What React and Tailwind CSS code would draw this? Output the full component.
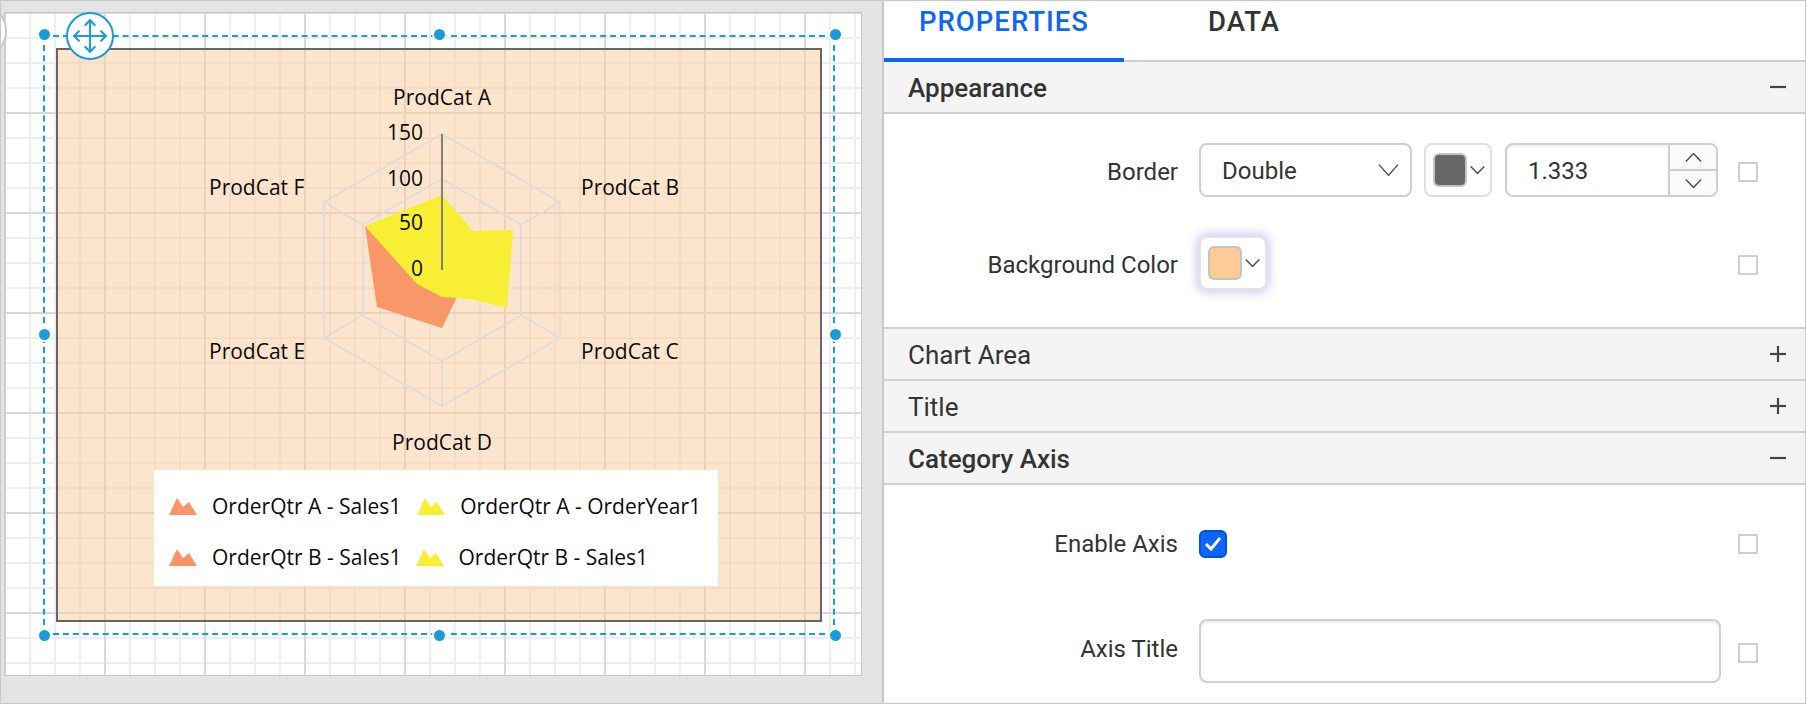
import { Move } from 'lucide-react';

const Chevron = ({ className, up }) => (
    <svg viewBox="0 0 20 10" fill="none" stroke="#505050" strokeWidth="1.4" preserveAspectRatio="none" className={className}>
        <polyline vectorEffect="non-scaling-stroke" points={up ? '1,9.5 10,0.5 19,9.5' : '1,0.5 10,9.5 19,0.5'} />
    </svg>
);

const Handle = ({ className }) => (
    <div className={`absolute w-[15px] h-[15px] rounded-full bg-[#1a9bdb] border-2 border-white ${className}`} />
);

const SquareBox = ({ className }) => <div className={`w-5 h-5 border-2 border-[#cfcfcf] bg-white shrink-0 ${className}`} />;

const Mountains = ({ color }) => (
    <svg width="28" height="17" viewBox="0 0 28 17" className="shrink-0">
        <polygon points="0,17 8,0 14,9 20,4 28,17" fill={color} />
    </svg>
);

const LegendItem = ({ color, label }) => (
    <div className="flex items-center gap-[15px]">
        <Mountains color={color} />
        <span>{label}</span>
    </div>
);

const SectionHeader = ({ title, open, bold }) => (
    <div className="h-[52px] shrink-0 bg-[#f4f4f4] border-b-2 border-[#d0d0d0] pl-6 pr-[18px] flex items-center justify-between">
        <span className={`text-[26px] pt-[2px] text-[#333] ${bold ? 'font-medium' : ''}`}>{title}</span>
        <svg width="18" height="18" viewBox="0 0 18 18" stroke="#444" strokeWidth="2.2">
            <line x1="1" y1="9" x2="17" y2="9" />
            {!open && <line x1="9" y1="1" x2="9" y2="17" />}
        </svg>
    </div>
);

const FormRow = ({ label, children, className, labelClass, boxClass }) => (
    <div className={`flex items-center ${className}`}>
        <div className={`w-[294px] text-right text-[24px] text-[#333] shrink-0 ${labelClass}`}>{label}</div>
        <div className="w-[539px] ml-[21px] shrink-0 flex items-center gap-[12px]">{children}</div>
        <SquareBox className={boxClass} />
    </div>
);

const ColorButton = ({ color, glow }) => (
    <div className={`w-[68px] h-[54px] rounded-lg bg-white flex items-center justify-between pl-[7px] pr-[5px] border-2 ${glow ? 'border-[#e4e4e4] shadow-[0_0_10px_3px_rgba(110,90,220,0.3)]' : 'border-[#e0e0e0]'}`}>
        <div className="w-[34px] h-[34px] rounded-md border-2 border-[#c4c4c4]" style={{ backgroundColor: color }} />
        <Chevron className="w-[15px] h-[8px]" />
    </div>
);

function Chart() {
    const hex = r => {
        const dx = r * 0.866, dy = r / 2;
        return `442,${270 - r} ${442 + dx},${270 - dy} ${442 + dx},${270 + dy} 442,${270 + r} ${442 - dx},${270 + dy} ${442 - dx},${270 - dy}`;
    };
    return (
        <svg viewBox="58 50 762 570" className="absolute inset-0 w-full h-full" fontFamily="'Open Sans', sans-serif" fontSize="21" fill="#0a0a0a">
            <g fill="none" stroke="#e0dcd8" strokeWidth="2">
                <polygon points={hex(136)} />
                <polygon points={hex(91)} />
                <line x1="442" y1="361" x2="442" y2="406" />
                <line x1="363" y1="225" x2="324" y2="202" />
                <line x1="521" y1="225" x2="560" y2="202" />
                <line x1="363" y1="315" x2="324" y2="338" />
                <line x1="521" y1="315" x2="560" y2="338" />
            </g>
            <polygon points="365,226 377,307 442,328 456,299 442,270" fill="#f89868" />
            <polygon points="442,195 473,231 513,230 507,308 470,299 442,297 417,284 365,226" fill="#f8ee34" />
            <line x1="442" y1="134" x2="442" y2="270" stroke="#808080" strokeWidth="2" />
            <text x="442" y="105" textAnchor="middle">ProdCat A</text>
            <text x="581" y="195">ProdCat B</text>
            <text x="581" y="359">ProdCat C</text>
            <text x="442" y="450" textAnchor="middle">ProdCat D</text>
            <text x="209" y="359">ProdCat E</text>
            <text x="209" y="195">ProdCat F</text>
            <g textAnchor="end">
                <text x="423" y="140">150</text>
                <text x="423" y="186">100</text>
                <text x="423" y="230">50</text>
                <text x="423" y="276">0</text>
            </g>
        </svg>
    );
}

function Designer() {
    return (
        <div className="w-[882px] h-full shrink-0 bg-[#e4e4e4] pl-1 pt-[11px] border-t border-b border-l border-[#c8c8c8] overflow-hidden">
            <div className="relative -ml-px w-[858px] h-[664px] border border-[#c8c8c8] pl-[38px] pt-[22px] bg-white bg-[linear-gradient(to_right,#d9d9d9_2px,transparent_2px),linear-gradient(to_bottom,#d9d9d9_2px,transparent_2px),linear-gradient(to_right,#eeeeee_2px,transparent_2px),linear-gradient(to_bottom,#eeeeee_2px,transparent_2px)] bg-[size:100px_100px,100px_100px,25px_25px,25px_25px] bg-[position:99px_99px,99px_99px,24px_24px,24px_24px]">
                {/* rotate handle, cut by the window edge */}
                <div className="absolute -left-[54px] -top-[10px] w-[56px] h-[56px] rounded-full border-2 border-[#c8c8c8] bg-white" />

                <div className="relative w-[792px] h-[600px] border-2 border-dashed border-[#1a9bdb] pl-[11px] pt-[11px]">
                    <div className="relative w-[766px] h-[574px] border-2 border-[#666] bg-[#fccb9b]/50">
                        <Chart />
                        <div className="absolute left-[96px] top-[420px] w-[564px] h-[116px] bg-white px-[15px] pt-[21px] pb-[13px] flex flex-col justify-between font-['Open_Sans',sans-serif] text-[21px] text-[#0a0a0a]">
                            <div className="flex gap-[16px]">
                                <LegendItem color="#f79468" label="OrderQtr A - Sales1" />
                                <LegendItem color="#f8ee34" label="OrderQtr A - OrderYear1" />
                            </div>
                            <div className="flex gap-[14px]">
                                <LegendItem color="#f79468" label="OrderQtr B - Sales1" />
                                <LegendItem color="#f8ee34" label="OrderQtr B - Sales1" />
                            </div>
                        </div>
                    </div>

                    <Handle className="-left-[8px] -top-[10px]" />
                    <Handle className="left-[387px] -top-[10px]" />
                    <Handle className="-right-[10px] -top-[10px]" />
                    <Handle className="-left-[8px] top-[290px]" />
                    <Handle className="-right-[10px] top-[290px]" />
                    <Handle className="-left-[8px] -bottom-[10px]" />
                    <Handle className="left-[387px] -bottom-[10px]" />
                    <Handle className="-right-[10px] -bottom-[10px]" />

                    <div className="absolute left-[21px] -top-[25px] w-[48px] h-[48px] rounded-full bg-white border-2 border-[#1a9bdb] flex items-center justify-center text-[#1a9bdb]">
                        <Move size={38} strokeWidth={1.3} />
                    </div>
                </div>
            </div>
        </div>
    );
}

function Properties() {
    return (
        <div className="flex-1 h-full flex flex-col border-l-2 border-r border-t border-b border-[#c8c8c8] bg-white font-['Roboto',sans-serif] overflow-hidden">
            <div className="h-[61px] shrink-0 flex border-b-2 border-[#d0d0d0]">
                <div className="w-[240px] -mb-[2px] h-[61px] border-b-4 border-[#0a66ff] text-[#0a66ff] text-[27.5px] font-medium tracking-[1px] pl-[35px]">PROPERTIES</div>
                <div className="text-[#333] text-[27.5px] font-medium tracking-[1px] pl-[84px]">DATA</div>
            </div>
            <SectionHeader title="Appearance" open bold />
            <div className="h-[215px] shrink-0 pt-[29px] flex flex-col gap-[39px] border-b-2 border-[#d0d0d0]">
                <FormRow label="Border" className="h-[54px]" labelClass="pt-1" boxClass="mt-1">
                    <div className="w-[213px] h-[54px] rounded-lg border-2 border-[#cfcfcf] flex items-center justify-between pl-[21px] pr-[11px] text-[24px] text-[#333]">
                        <span className="pt-[2px]">Double</span>
                        <Chevron className="w-[21px] h-[12px]" />
                    </div>
                    <ColorButton color="#666666" />
                    <div className="w-[213px] h-[54px] ml-px rounded-lg border-2 border-[#cfcfcf] flex text-[24px] text-[#333] overflow-hidden">
                        <div className="flex-1 flex items-center pl-[21px] pt-[2px] shadow-[inset_0_2px_3px_rgba(0,0,0,0.08)]">1.333</div>
                        <div className="w-[48px] border-l-2 border-[#cfcfcf] flex flex-col bg-[#fafafa]">
                            <div className="flex-1 flex items-center justify-center border-b-2 border-[#cfcfcf]"><Chevron up className="w-[17px] h-[9px]" /></div>
                            <div className="flex-1 flex items-center justify-center"><Chevron className="w-[17px] h-[9px]" /></div>
                        </div>
                    </div>
                </FormRow>
                <FormRow label="Background Color" className="h-[54px]" labelClass="pt-1" boxClass="mt-1">
                    <ColorButton color="#fccb96" glow />
                </FormRow>
            </div>
            <SectionHeader title="Chart Area" />
            <SectionHeader title="Title" />
            <SectionHeader title="Category Axis" open bold />
            <div className="flex-1 flex flex-col pt-[44px] gap-[60px]">
                <FormRow label="Enable Axis" className="h-[30px]">
                    <div className="w-[28px] h-[28px] rounded-md bg-[#0a66ff] border-2 border-[#0552cc] flex items-center justify-center">
                        <svg width="18" height="16" viewBox="0 0 18 16" fill="none" stroke="#fff" strokeWidth="3"><polyline points="2,8 7,13 16,2" /></svg>
                    </div>
                </FormRow>
                <FormRow label="Axis Title" className="h-[64px]" labelClass="pb-1" boxClass="mt-1">
                    <div className="w-[522px] h-[64px] rounded-lg border-2 border-[#cfcfcf] shadow-[inset_0_2px_3px_rgba(0,0,0,0.08)]" />
                </FormRow>
            </div>
        </div>
    );
}

export default function App() {
    return (
        <div className="w-[1806px] h-[704px] flex overflow-hidden bg-white">
            <Designer />
            <Properties />
        </div>
    );
}
